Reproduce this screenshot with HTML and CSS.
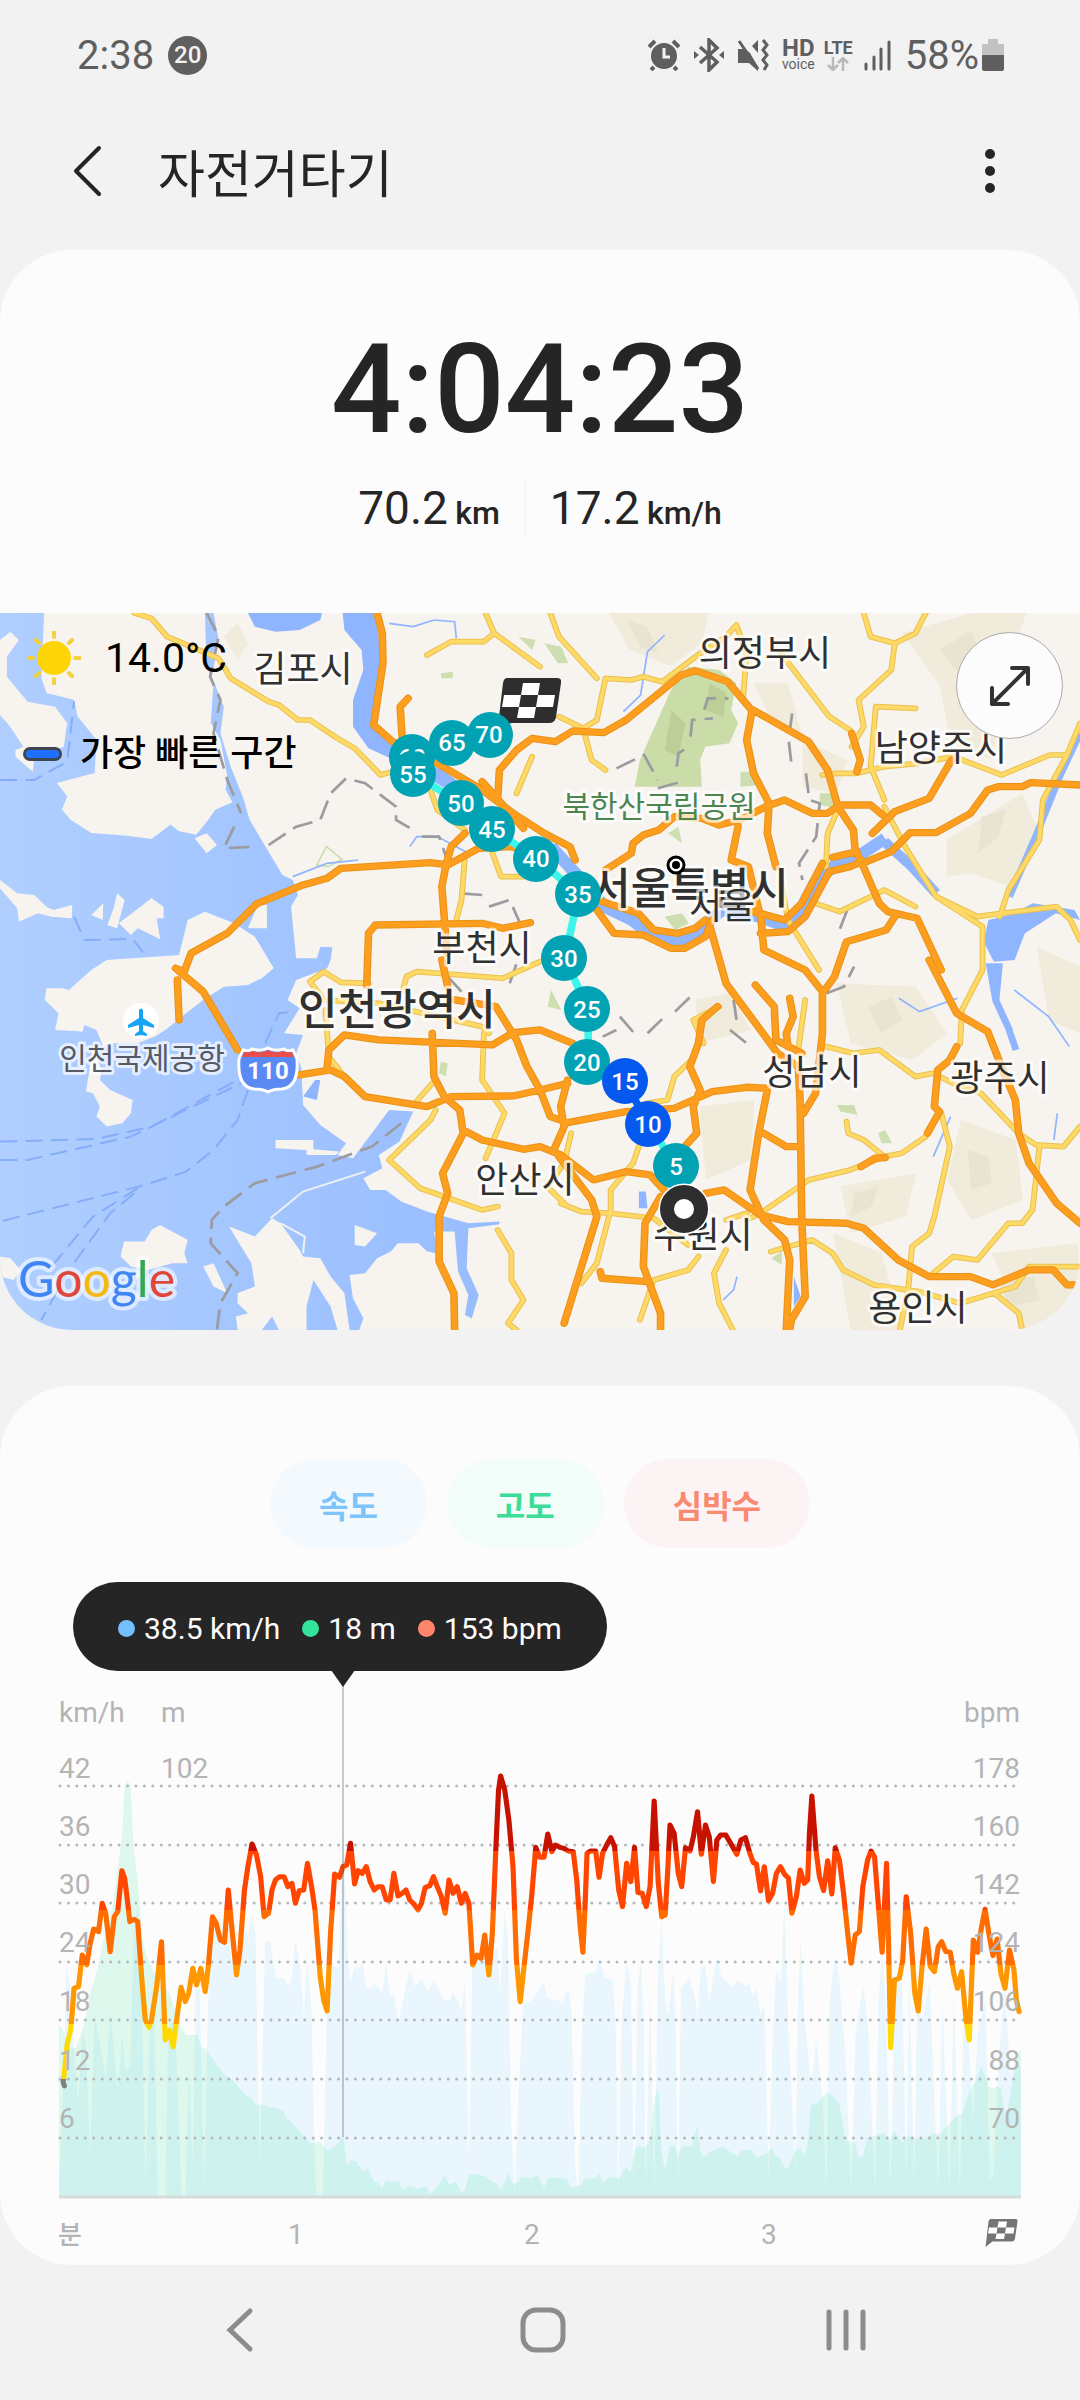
FILE: index.html
```html
<!DOCTYPE html>
<html lang="ko">
<head>
	<meta charset="UTF-8">
	<meta name="viewport" content="width=device-width">
	<title>자전거타기</title>
	<link rel="stylesheet" href="styles.css">
</head>
<body>
	<div class="status">
		<span class="time">2:38</span>
		<span class="count">20</span>
		<div class="status-icons">
			<svg width="34" height="32" viewBox="0 0 34 32"><circle cx="17" cy="17" r="13" fill="#5f5f5f"/><path d="M7 28l-3 3M27 28l3 3M2 8l6-6M32 8l-6-6" stroke="#5f5f5f" stroke-width="4"/><path d="M17 9v9h6" fill="none" stroke="#f2f2f2" stroke-width="3"/></svg>
			<svg width="30" height="34" viewBox="0 0 30 34"><path d="M6 9l17 15-8 8V2l8 8L6 25" fill="none" stroke="#5f5f5f" stroke-width="3.5"/><path d="M0 13l5 4-5 4zM30 13l-5 4 5 4z" fill="#5f5f5f"/></svg>
			<svg width="32" height="32" viewBox="0 0 32 32"><path d="M1 10h7l5 4 8 14v4l-9-8H1zM15 7l6-6v13z" fill="#5f5f5f"/><path d="M2 2l19 28M26 1l4 5-4 5 4 5-4 5 4 5-3 5" fill="none" stroke="#5f5f5f" stroke-width="3"/></svg>
			<span class="net"><b>HD</b><small>voice</small></span>
			<span class="net"><b class="lte">LTE</b><svg width="22" height="14" viewBox="0 0 22 14"><path d="M6 0v12M1 8l5 5 5-5M16 14V2M11 6l5-5 5 5" fill="none" stroke="#b9b9b9" stroke-width="2.5"/></svg></span>
			<svg width="30" height="32" viewBox="0 0 30 32"><path d="M4 25v5M12 18v12M19 10v20M27 3v27" stroke="#5f5f5f" stroke-width="3" stroke-linecap="round"/></svg>
			<span class="percent">58%</span>
			<svg width="22" height="32" viewBox="0 0 22 32"><path d="M6 0h10v5h6v12H0V5h6z" fill="#c2c2c2"/><path d="M0 16h22v14q0 2-2 2H2q-2 0-2-2z" fill="#5f5f5f"/></svg>
		</div>
	</div>

	<header class="toolbar">
		<button class="icon-btn" aria-label="뒤로"><svg width="30" height="52" viewBox="0 0 30 52"><path d="M27 3L4 26l23 23" fill="none" stroke="#252525" stroke-width="4" stroke-linecap="round" stroke-linejoin="round"/></svg></button>
		<h1>자전거타기</h1>
		<button class="icon-btn" aria-label="메뉴"><svg width="12" height="46" viewBox="0 0 12 46"><g fill="#252525"><circle cx="6" cy="6" r="5"/><circle cx="6" cy="23" r="5"/><circle cx="6" cy="40" r="5"/></g></svg></button>
	</header>

	<section class="card">
		<div class="clock">4:04:23</div>
		<div class="stats">
			<p>70.2 <small>km</small></p>
			<p>17.2 <small>km/h</small></p>
		</div>

		<div class="map">
			<svg class="map-svg" viewBox="0 0 1080 717">
				<defs>
					<linearGradient id="sea" x1="0" y1="0" x2="1" y2="0"><stop offset="0" stop-color="#b0cfff"/><stop offset="1" stop-color="#97bcff"/></linearGradient>
					<symbol id="flag" viewBox="0 0 64 56"><path d="M10 0h50q5 0 4 5l-5 34q-1 6-7 6H14L0 56 6 5q1-5 4-5z"/><path fill="#fff" d="M26 5h17l-2 12H24zM7 17h17l-2 12H5zM41 17h17l-2 12H39zM22 29h17l-2 11H20z"/></symbol>
					<path id="local" d="M390 39l50 16 45 55 150 65 35 60 110 70 30 10 55 45 35 0 80 55 50 30 75 80 35-10M1240 165l70-40h95l30-25-25-61M1435 100l133 100M1598 39l25 71 110 125M1923 245l-55-15-35 10-75-5-25 125-40 25-70-35M1693 385l25 95 40 30M1923 245l110-85 75-50 30-35 30 85-10 130M2268 160l140 190 60 40 20 50M2508 39l20 71 70 20-10 80-95 90 15 80-35 60M2598 130l60-30 30-61M2658 325l-115-5-15 180 40 100M2388 525l40-5 60 0 80-20 100-10 100-20 140 55 140-60 50 0 38-95M3098 465l-70 135-10 120-90 150-25 80M2568 620l60 120 90 150 120 60 70-10 160-20 40 40 28 60M2718 890l135 90v130l-60 120-5 100M2368 910l70 25 130-65 90 50M2428 640l-25 60-5 100M2268 850l20 110 90 150M2398 1340l80 20 75-10 105 80 50-10 60 30 80 30 110 120 50 35 80 5 48-60M3018 1640l-20 190-30 40h-40l-90 110-70-10-70 60M2733 1540l25 100-45 210-15 50-50 40-10 120-25 130M2458 1565l5 35 45 20 60 50 50-10 70-50M2568 1670l-100 40-120 30-140 100-40 20M2238 1955l120-35 60 40 30 50 90 45 130 20 120 35 160-50 40-60h148M2888 2080l70 60 10 50M2108 1950l-35 70 15 90 40 80M2108 1860l60-20M1773 1840v-70l65-80 20-60M1628 1810l60 25 85 5 125 15 100 80M1768 1850l-35 140-45 60M1658 1600l-20 90-50 70 50 50M1898 2040l-40 120M1898 2040l100-30 30-40M1255 1450l-50 60M1265 1530l-15 30-120 120 90 85 180 65 45-10M1405 1300l-5 140 65 100-55 135M1445 1890l40 70v80l35 60-45 70 25 20M1350 770l-10 130-15 60M1430 760l25 70h113M1545 470l-45 110M1250 570l20 60 80 60M1070 1150l-80-3-50-32-40 30 40 55 160 10 300 70 20 20M1170 1170l10-40 30-15 250 20 108-50M945 1230l10 140 45 60M2088 1220l-75 40 30 70M2008 1380l-50 50-20 70-60 10M2338 1200l-20 150"/>
					<path id="main" d="M1095 39l15 61 2 90-27 185 55 50 130 65 130 80 90 70 90 60 75 40 15 40M1185 295l-23 25 6 100M1400 545l60 70 60 70M510 1105l25 10 20-55 105-60 85-88 135-57 70-20 40-30 260-17 50 7 90-50 90-5 100 20M1283 1080l17 80M1350 700l-40 40-15 55-12 65 15 200M1065 1155l5-155 20-25 310-5 60 15 80-17M1445 600l5-90 50-60 45-35 68 10 50-32 90 5 65-38 160-135 40-13 95 33 65 80 170 100 55 85 30 110 45 70 5 60 20 40 50 120 25 25 85 20 70 155M2698 1080l80 160 90 55 40 105 40 100 10 100 30 90 80 120 68 60M2183 335l-15 85 20 100 45 90-5 90 25 100M2208 940l10 110 120 60 50 65M1758 810l75-50 5-30 30-25 45-15 45-40 80 5 50 20 60-15 75-40 55-20 80 40h45l35-25h90l35 30M2533 700l65-65 100-40 65-115M2418 772l70-17M2503 790l85-35 55-57h75l100-58 50-70 30-10h70l25-12 143 7M1733 930l50 70 85 5 80 40h40l60-35 20-50M1735 900l118 40 45 50 70 10 50-15 30-25M2188 935l90 25 50-50 60-120M2208 1000l80-5 50-45 70-135 60-15 35-15M2063 985l45 165 150 210 60 40 5 100 5 360 10 230-40 70-5 30M2388 1175v125l-15 140-5 40-35 60M2143 680l-20 100 50 20 35 150M2598 950l-25 40-115 35-35 105-35 50M510 1105l80 70 100 175M515 1140l5 120M870 1425l90-15 40 20 60 60 180 30 70-30 180-2 78-18 80-20M950 1400l5-50 45-45 100 15 330 15 60-37 78-8 95 40M1255 1300l5 130 30 60 45 40 10 70-60 120 15 60-25 70v135l43 95 2 110M1345 1590l55 30 120 28 48-8 60 25 95 75 95-25 70 10 40 45M1320 1200l120 20 60 100 30 80 38 70 30 80 50 18 170-33 140-10 110-50 100-13 60 3M1648 1440l-20 80 10 60-30 70 110 150 15 50-95 320M2083 1220l-45 40-10 70-25 70 30 70-20 50 10 80-35 40M2228 1470l-25 130-25 170 40 90 60 60 15 60-10 210M2048 1780l55-10 105 75 80 20 170 5 50 15 100 95 90 50h120l65 25 105-45h70l40 45h20M1918 1790l-45 80-5 130 50 140v50M1743 2015l5 20 130 10M2193 1155l55 65 5 100 75 40M2293 1195l10 55-20 50 5 40M2778 1340l-20 40-35 30-10 110 15 15-35 65M2218 1600l65 40h30M2473 400l25 80-10 35M2500 1700l40-25 30-2"/>
				</defs>
				<rect width="1080" height="717" fill="#f7f4ef"/>
				<g transform="scale(.3444 .3333) translate(0 -39)">
					<!-- hills -->
					<path fill="#f0ebda" d="M1768 39h290l-20 90-90 70-120-50zM2188 250l100 0 40 150-80-20zM2620 100l200-61h160l-30 90-70 350-120-50-30-170zM2748 720l220-140 50 120-80 160-120-40-70 10zM2030 1520l160-20-10 180-130 60zM2430 1150l230 10 90 140-100 80-180-50zM2790 1560l160 60 20 180-150 60-70-120zM2440 1760l220-40-30 130-160 50zM2420 1900l140 60 60 230H2470zM2880 1960l250-30 6 260h-160zM2180 1290l-60-110-100 20 10 130zM3010 1040l126 60v200l-90-40zM2330 420l130 60-30 100-100-20zM255 150l130-60 20 60-80 40-30 80-50-10 30-80zM290 600l80 10 20 60-90-40zM650 110l40-40 30 60-30 50z"/>
					<path fill="#e9e4d1" d="M1820 60l60 20 30 80-50-20zM2730 150l90-60 20 60-60 70zM2850 650l70-20-20 80-60 50zM2520 1220l70-30 30 70-60 40zM2810 1650l60 20 10 80-60 20zM2480 1780l70-20-20 60-60 30zM2900 2050l100-20 20 70-90 20zM330 250l60-60 10 30-30 50z"/>
					<!-- parks -->
					<path fill="#cadca7" d="M1998 200l90 10 50 40-15 80 20 40-25 60-70 10-15 40 5 80h-195l15-80 90-210z"/>
					<path fill="#bdcf97" d="M2060 250l50 30-10 70-50-20zM1950 330l40 40-20 100-40-20z"/>
					<path fill="#cddfb0" d="M1580 130l50 10 20 50h-30zM2150 515l50 0 10 40-60 5zM2380 580l40 0 10 45-50-10zM1940 700l30-20 10 50zM1930 950l50-10 20 30-40 20zM1505 110l50 10-10 30zM1280 220l35-5 0 20-33 0zM1600 1170l30 60-40-10zM2430 1515l50 0 10 30-50-10zM2550 1600l20-10 20 40-30 0zM2240 1975l30-20 0 40zM1280 1385l20 5-5 40-20-10z"/>
					<path fill="none" stroke="#cddfb0" stroke-width="5" d="M920 795l28-55 45 38-40 22z"/>
					<!-- sea and islands -->
					<path fill="url(#sea)" d="M0 39H620l15 81-20 110 35 90-10 80 30 100 35 90 20 70 95 165 30 15 15 45-20 35 15 155h60l10-35 35 2-5 38-10 25-90 35-25 60 35 25-45 75 55 5-20 55 15 45 5 110 50 60 75 55-25 35 45 10 105-145 70 5-40 90-60 40 10 40-55 30 20 35h45l45 35 75 30 120 35 90-5v8l-90 12-5 120 35 80-20 70-20-10 10-60-30-70-10-120-60 0 10 65-30-5-25-25-60 0-20 25-40 20-35 45-45 5 10 70 30 60-20 60H0z"/>
					<g fill="#f7f4ef">
						<path d="M128 39H595l5 160 20 50-8 120 28 50 20 110-5 40 20 38-50 22-20 30-35 45-50-10-25-20-55 43-70-10-105-8-60-40-25-30 15-40-30-40 110-30 5-100-55-70-10-50-80-20-15-45z"/>
						<path d="M0 120l30-25 25 25-35 50v60l60 75 80 15 35 50-10 70-85 30-5 45-50-45v-20l23-10-38-60-30-35zM565 715l35-15 30 35-30 25zM0 840l50 40 50 5 35 35 20 10 55-15-2 40-58-5-40-10-55 25-5-40-50-60zM265 945l35-35-2 50zM340 880l22 20-22 85-28-10 18-50zM345 970l95-75 35 25v35h-20l10 63-65-33-20 20zM750 910l25 5v70h-55z"/>
						<path d="M265 1110l45-30 210-15 25-105 50-25 85 35 60 40 55 95-35 30-40 20-70 5-60 40-50 40-60 50-30 20-50 20h-80l-20 10-20-50-35-15-5 20-80-5 10-50-40-40 5-35h45l20 5zM270 1340l25 70-5 30 30 30 65 30-5 40-25 30-45 10-30-30 10-30-20-40-20-5zM360 1925h60l20-35 25-15 80 45-10 40 10 30-45 0-70 20-50-10-30-30zM1030 1875l65 25-35 40-30-5zM0 1970l30 5 30 35-20 30-40-10zM800 1620h110v28l75 7-10 10h-85v-15l-90-5zM590 2000l30-10 40 90-40-20z"/>
						<path d="M665 1880l75 30 50-55 25 15 55 80 10 20 50 5 30 55 40 50 15 110h-35l-20-70-50-80-20 80 0 70h-80l-20-40-30 40h-70l-5-40 35-10-30-30v-30l50-20-10-70-30-50z"/>
					</g>
					<path fill="none" stroke="#eef0f2" stroke-width="6" d="M785 1855l95-80 180-60M815 1870l70 40-5 50"/>
					<path fill="#8fb5ff" d="M720 39l20 41 60 15 70-5 60-30 5-21zM995 39h95l20 151-25 180 70 80 130 60 80 60v30l-80-40-120-70-95-45-45-65v-80l30-90-5-60-50-60zM880 1490l35-50 15 0-10 60zM2870 960l60-15 70-35 120 20 16 30-70-20-90 60-30 80-60 5-30-60zM2862 1090h50l-10 110 40 90-20 5-40-90zM1855 1775l20 0 5 50-25 0zM2305 2030l20 60-20 30z"/>
					<g fill="none" stroke="#8fb5ff">
						<path stroke-width="36" d="M1600 740l80 90 75 90 80 40 60 50 70 20 70-40 60-60 110 20 65 25 55-45 40-80 60-55 80-35 65-45"/>
						<path stroke-width="30" d="M2568 725l80 75 70 80"/>
						<path stroke-width="20" d="M3136 400l-55 120-70 180-80 190M2930 1290l20 60"/>
						<path stroke-width="5" d="M1930 105l-50 50-20 130-50 50M1130 70l70 10 60-20 60 5 5 50M2610 1195l60 40 110-40M2945 1170l100 80 60 90M2760 1550l-50 120M1190 740l20-30 60 0 90 50M2100 2100l30-30 10-40M3070 1540l-10 80M850 830l100-40 90-10"/>
					</g>
					<!-- ferry lines -->
					<g fill="none" stroke="#86adf8" stroke-width="6" stroke-dasharray="50 24">
						<path d="M0 1625l280-8 160-37 250-140M0 1680l80 0 300-70 160-80 160-80M720 1470l-30 90-70 90-80 65-120 40L0 1865M400 1765l-130 85-120 150M390 1780l-70 60-120 170-80 150M0 540l100 0 95-55 20-180M770 1330l40-90 40-5M215 950l30 70 140-3 30 40"/>
					</g>
					<g fill="none" stroke="#9b9ba0" stroke-width="8" stroke-dasharray="60 26">
						<path d="M600 39l35 71-25 120 30 70-20 100 40 140 40 100M680 680l-30 65 90-5M780 735l80-55 70-20 30-80 45-45 55 15 90 70 0 40 50 30M1165 1570l-85 70-160 60-180 50-90 70-35 40-3 70 78 90-50 90-10 80M1225 710l50 0 20 60M1420 920l60-20 30 70M1340 880l60 5M1790 505l80-40 40 75M1910 565l70-20M2045 330l10-35 60 0M2005 410l5-50 60-5M1965 500l5-40 30-20M2300 340l-10 80 10 90M2340 520l10 80 30 10-10 100-50 80 10 50M2460 930l-30 80M1960 1235l60-60M1880 1300l50-50M2130 1200l10 70M2400 1180l50-20 30-60M1300 1130l40 45M1480 1150l20-60M1750 1310l40-20M1800 1250l50 60M2120 1290l60 50"/>
					</g>
					<use href="#local" class="road casing-yellow"/>
					<use href="#local" class="road fill-yellow"/>
					<use href="#main" class="road casing-orange"/>
					<use href="#main" class="road fill-orange"/>
					<!-- ridden track -->
					<path fill="none" stroke="#3df6ea" stroke-width="22" d="M1422 406l-108 24-114 50 0 43 140 87 90 78 130 88 120 107-40 192 68 153v159l108 57"/>
					<path fill="none" stroke="#055ee8" stroke-width="22" d="M1814 1444l69 129"/>
					<path fill="none" stroke="#3df6ea" stroke-width="22" d="M1883 1573l81 126 22 130"/>
				</g>

				<g class="labels">
					<text x="303" y="69">김포시</text>
					<text x="765" y="53">의정부시</text>
					<text x="941" y="148">남양주시</text>
					<text x="659" y="204" class="park">북한산국립공원</text>
					<text x="690" y="291" class="big">서울특별시</text>
					<text x="722" y="306">서울</text>
					<text x="482" y="348">부천시</text>
					<text x="397" y="412" class="big">인천광역시</text>
					<text x="142" y="456" class="airport">인천국제공항</text>
					<text x="525" y="580">안산시</text>
					<text x="812" y="472">성남시</text>
					<text x="1000" y="478">광주시</text>
					<text x="703" y="635">수원시</text>
					<text x="918" y="708">용인시</text>
				</g>
				<circle cx="676" cy="252" r="8" fill="#fff" stroke="#000" stroke-width="3"/><circle cx="676" cy="252" r="4"/>
				<circle cx="141" cy="408" r="18" fill="#fff"/>
				<path fill="#16a5f5" d="M139 397q2-3 4 0v8l11 7v3l-11-3v6l4 3v2l-6-1-6 1v-2l4-3v-6l-11 3v-3l11-7z"/>
				<path d="M243 437q6 2 9-1 9 3 16-1 7 4 16 1 3 3 9 1l4 9q2 28-15 30-9 0-14 3-5-3-14-3-17-2-15-30z" fill="#5b8af5" stroke="#fff" stroke-width="3"/>
				<path d="M244 439q6 1 9-1 9 3 15-1 6 4 15 1 3 2 9 1l2 5h-52z" fill="#e84f4b"/>
				<text x="268" y="466" class="shield">110</text>

				<use href="#flag" x="497" y="65" width="64" height="56" fill="#2e2e2e"/>
				<g class="pins">
					<circle cx="412" cy="144" r="23"/><text x="412" y="153">60</text>
					<circle cx="413" cy="161" r="23"/><text x="413" y="170">55</text>
					<circle cx="452" cy="130" r="23"/><text x="452" y="138">65</text>
					<circle cx="490" cy="122" r="23"/><text x="489" y="130">70</text>
					<circle cx="461" cy="190" r="23"/><text x="461" y="199">50</text>
					<circle cx="492" cy="216" r="23"/><text x="492" y="225">45</text>
					<circle cx="536" cy="246" r="23"/><text x="536" y="254">40</text>
					<circle cx="578" cy="281" r="23"/><text x="578" y="290">35</text>
					<circle cx="564" cy="345" r="23"/><text x="564" y="354">30</text>
					<circle cx="587" cy="396" r="23"/><text x="587" y="405">25</text>
					<circle cx="587" cy="449" r="23"/><text x="587" y="458">20</text>
					<circle cx="625" cy="468" r="23" class="fast"/><text x="625" y="477">15</text>
					<circle cx="648" cy="511" r="23" class="fast"/><text x="648" y="520">10</text>
					<circle cx="676" cy="553" r="23"/><text x="676" y="562">5</text>
				</g>
				<circle cx="684" cy="596" r="17" fill="#fff" stroke="#fff" stroke-width="17"/><circle cx="684" cy="596" r="17" fill="#fff" stroke="#2e2e2e" stroke-width="14"/>
				<text x="18" y="684" class="google"><tspan fill="#4285f4">G</tspan><tspan fill="#e2453a">o</tspan><tspan fill="#f5b90f">o</tspan><tspan fill="#4285f4">g</tspan><tspan fill="#34a853">l</tspan><tspan fill="#e2453a">e</tspan></text>
			</svg>

			<div class="overlay">
				<p class="weather"><svg width="54" height="54" viewBox="-27 -27 54 54"><circle r="17" fill="#fdd406"/><path d="M0-26v5M0 21v5M-26 0h5M21 0h5M-18-18l3 3M15 15l3 3M-18 18l3-3M15-15l3-3" stroke="#f4d03c" stroke-width="4" stroke-linecap="round"/></svg><span>14.0°C</span></p>
				<p class="fastest"><i></i>가장 빠른 구간</p>
			</div>
			<button class="expand" aria-label="지도 확대"><svg width="42" height="42" viewBox="0 0 42 42"><path d="M3 39L39 3M23 3h16v16M3 23v16h16" fill="none" stroke="#333" stroke-width="4" stroke-linecap="round" stroke-linejoin="round"/></svg></button>
		</div>
	</section>

	<section class="card chart-card">
		<div class="tabs">
			<button class="tab speed">속도</button>
			<button class="tab height">고도</button>
			<button class="tab heart">심박수</button>
		</div>
		<div class="tooltip">
			<span class="speed">38.5 km/h</span>
			<span class="height">18 m</span>
			<span class="heart">153 bpm</span>
		</div>
		<svg class="chart" viewBox="59 -29 962 594">
			<defs>
				<linearGradient id="zones" gradientUnits="userSpaceOnUse" x1="0" y1="0" x2="0" y2="1200">
					<stop offset=".3775" stop-color="#c81200"/><stop offset=".3775" stop-color="#ff4500"/>
					<stop offset=".525" stop-color="#ff4500"/><stop offset=".525" stop-color="#ff6d00"/>
					<stop offset=".6625" stop-color="#ff6d00"/><stop offset=".6625" stop-color="#ff9700"/>
					<stop offset=".81" stop-color="#ff9700"/><stop offset=".81" stop-color="#ffd900"/>
					<stop offset=".9475" stop-color="#ffd900"/><stop offset=".9475" stop-color="#808080"/>
				</linearGradient>
			</defs>
			<g transform="scale(.3443 .3333)">
				<!-- speed -->
				<path fill="#e9f6fd" d="M171 1488L185 1090 193 790 202 850 215 1040 227 1210 240 990 250 1040 262 1375 275 940 308 1140 320 930 343 1175 354 1005 365 1110 378 1100 388 700 400 610 410 800 423 1465 435 960 447 880 458 1488H480L488 1000 500 960 510 1000 527 1488H538L549 1090 560 1400 568 860 580 870 594 1480 603 960 612 700 622 650 640 730 650 735 663 620 672 780 690 800 712 690 720 710 733 640 742 700 755 1410 765 960 770 720 785 725 800 830 825 835 838 860 848 830 858 720 872 800 882 950 893 780 905 930 910 1200 918 1488H938L950 900 962 780 972 800 985 800 990 600 997 390 1004 600 1010 770 1018 845 1030 800 1042 805 1052 790 1064 860 1077 865 1090 850 1110 880 1121 790 1133 885 1144 885 1158 970 1170 900 1190 810 1205 860 1224 835 1245 875 1259 840 1280 880 1293 900 1304 905 1316 875 1328 900 1340 935 1350 840 1362 1390 1372 790 1385 775 1410 780 1430 770 1445 740 1453 890 1465 630 1475 720 1484 1250 1495 1488 1505 1200 1520 910 1540 905 1560 880 1568 860 1580 850 1590 895 1610 900 1635 905 1650 865 1660 930 1670 1400 1680 1480 1690 1000 1700 820 1730 815 1740 775 1755 830 1780 840 1788 980 1796 1480 1806 950 1820 785 1832 850 1842 1470 1852 850 1862 785 1870 1000 1876 1480 1888 870 1900 1480 1912 800 1922 650 1932 900 1940 950 1956 810 1962 980 1970 1480 1978 860 1990 850 2003 835 2020 900 2026 960 2036 800 2048 795 2060 910 2070 840 2083 765 2095 830 2125 860 2142 840 2165 860 2175 850 2187 890 2197 865 2208 940 2220 915 2232 1440 2245 1000 2254 810 2268 850 2278 600 2290 1000 2310 1410 2318 900 2325 720 2337 960 2357 1160 2370 1020 2390 1200 2400 1488 2410 900 2425 765 2437 830 2455 1060 2472 1480 2485 1000 2508 855 2522 1000 2541 1480 2552 900 2562 755 2572 900 2586 1480 2600 840 2620 850 2633 1470 2641 800 2655 1470 2664 900 2680 960 2700 845 2725 1480 2737 905 2758 1475 2770 880 2788 1488 2800 900 2812 1000 2826 1265 2840 1000 2862 900 2875 1440 2885 1430 2900 1100 2918 860 2935 1130 2945 1090 2965 1100V1488z"/>
				<!-- elevation -->
				<path fill="#33e39a" fill-opacity=".15" d="M171 972L185 995 195 1045 220 1045 240 990 250 945 262 880 285 800 300 720 318 660 330 600 345 480 355 400 362 260 370 243 379 255 388 440 400 540 412 700 425 770 435 785 447 815 460 860 490 870 505 920 520 960 527 985 540 1005 574 1005 585 1045 598 1045 620 1080 650 1122 680 1145 710 1182 733 1195 742 1215 762 1213 780 1223 802 1222 822 1233 835 1258 852 1272 882 1310 903 1330 930 1325 950 1353 975 1338 997 1307 1007 1395 1020 1380 1035 1385 1052 1415 1068 1405 1085 1443 1100 1450 1110 1465 1120 1443 1158 1445 1168 1470 1190 1458 1210 1465 1238 1460 1248 1482 1270 1460 1292 1425 1305 1455 1325 1445 1340 1478 1350 1470 1362 1425 1385 1422 1410 1430 1430 1447 1442 1450 1455 1470 1478 1418 1488 1450 1500 1450 1512 1432 1545 1435 1560 1425 1568 1437 1580 1463 1592 1433 1645 1435 1660 1463 1688 1455 1700 1435 1730 1435 1740 1420 1750 1447 1775 1432 1800 1435 1810 1410 1822 1405 1832 1418 1845 1345 1858 1338 1870 1345 1888 1320 1903 1190 1910 1170 1914 1180 1920 1350 1932 1415 1945 1340 1958 1335 1970 1367 1980 1340 2010 1338 2025 1275 2036 1362 2048 1370 2063 1355 2098 1340 2120 1355 2140 1370 2155 1350 2185 1350 2197 1375 2225 1360 2243 1345 2250 1365 2265 1375 2280 1405 2292 1400 2310 1350 2326 1345 2337 1370 2345 1340 2355 1215 2375 1210 2403 1175 2420 1190 2438 1215 2457 1325 2484 1328 2492 1370 2506 1370 2518 1315 2570 1300 2582 1320 2598 1295 2622 1328 2640 1305 2660 1318 2690 1315 2710 1300 2730 1305 2750 1280 2782 1245 2795 1243 2815 1175 2835 1140 2850 1102 2862 1130 2872 1160 2885 1167 2897 1157 2907 1165 2915 1220 2925 1240 2940 1150 2955 1060 2965 1050V1490H171z"/>
			</g>
			<path class="grid" d="M60 86H1021M60 145H1021M60 203H1021M60 262H1021M60 320H1021M60 379H1021M60 438H1021"/>
			<path d="M59 497H1021" stroke="#d6dcda" stroke-width="3"/>
			<g transform="scale(.3443 .3333)">
				<!-- heart rate -->
				<path class="pulse" d="M187 1158L183 1145 185 1137 195 1035 205 990 208 960 215 865 228 860 239 765 252 795 262 730 272 687 286 695 297 610 307 640 320 755 332 650 342 635 354 512 362 535 370 600 377 665 390 658 400 665 412 840 422 960 433 982 440 960 455 860 469 725 480 1020 492 990 503 1040 513 960 526 862 538 905 548 880 560 805 571 855 583 805 596 875 605 800 617 650 628 670 640 720 652 727 663 570 675 700 687 825 697 750 710 570 720 500 732 432 745 465 757 530 767 650 780 640 790 570 800 540 812 530 825 530 836 560 848 550 858 610 869 572 882 570 893 490 905 560 915 630 930 830 940 900 950 933 960 700 972 522 986 532 996 500 1007 495 1018 430 1030 552 1040 512 1052 520 1064 500 1075 545 1087 570 1098 560 1110 560 1122 600 1133 600 1144 520 1156 588 1168 580 1179 570 1190 600 1202 612 1214 630 1224 610 1235 562 1248 558 1259 530 1270 560 1282 590 1293 640 1304 540 1316 580 1328 560 1340 610 1351 580 1362 610 1373 795 1385 765 1397 775 1408 705 1420 825 1430 700 1440 450 1448 270 1454 228 1466 270 1478 360 1490 500 1500 780 1511 905 1522 800 1535 680 1545 580 1556 442 1568 472 1580 472 1591 402 1603 455 1613 435 1626 442 1638 445 1650 453 1665 455 1675 540 1685 680 1693 757 1700 600 1705 460 1715 453 1730 453 1740 532 1750 460 1762 435 1774 413 1785 440 1797 570 1808 620 1820 490 1832 545 1843 442 1853 578 1865 580 1877 620 1888 560 1900 303 1912 550 1922 650 1932 645 1940 500 1946 375 1958 400 1970 520 1980 560 1991 443 2004 453 2014 410 2026 335 2037 463 2049 375 2060 410 2072 545 2082 420 2093 405 2108 405 2125 435 2140 463 2152 420 2165 413 2178 460 2188 488 2197 492 2209 573 2220 500 2232 602 2244 580 2255 520 2267 500 2278 522 2290 535 2300 640 2313 590 2324 510 2336 550 2346 540 2351 400 2358 288 2370 450 2380 530 2392 572 2404 482 2416 582 2426 443 2438 480 2450 580 2462 700 2472 790 2484 705 2496 695 2506 560 2520 480 2530 453 2540 470 2550 600 2562 757 2575 490 2580 700 2587 1043 2598 840 2612 835 2622 780 2632 590 2645 700 2657 880 2667 933 2678 800 2690 687 2702 800 2714 815 2725 740 2735 725 2747 755 2760 757 2770 820 2781 865 2793 815 2805 950 2815 1020 2827 720 2839 757 2851 680 2861 628 2872 700 2884 767 2896 717 2907 820 2919 865 2932 750 2945 810 2952 900 2960 935"/>
			</g>
			<path d="M343-15V437" stroke="#555" stroke-opacity=".6"/>
			<path d="M331-30h24l-12 17z" fill="#252525"/>
			<g class="axis">
				<text x="59" y="22">km/h</text><text x="161" y="22">m</text>
				<text x="59" y="78">42</text><text x="161" y="78">102</text>
				<text x="59" y="136">36</text>
				<text x="59" y="194">30</text>
				<text x="59" y="252">24</text>
				<text x="59" y="311">18</text>
				<text x="59" y="370">12</text>
				<text x="59" y="428">6</text>
				<g class="right">
					<text x="1020" y="22">bpm</text>
					<text x="1020" y="78">178</text>
					<text x="1020" y="136">160</text>
					<text x="1020" y="194">142</text>
					<text x="1020" y="252">124</text>
					<text x="1020" y="311">106</text>
					<text x="1020" y="370">88</text>
					<text x="1020" y="428">70</text>
				</g>
				<text x="58" y="544" class="unit">분</text>
				<text x="288" y="544">1</text>
				<text x="524" y="544">2</text>
				<text x="761" y="544">3</text>
			</g>
			<use href="#flag" x="985" y="519" width="33" height="28" fill="#757575"/>
		</svg>
	</section>

	<nav class="nav">
		<button aria-label="이전"><svg width="28" height="46" viewBox="0 0 28 46"><path d="M24 4L4 23l20 19" fill="none" stroke="#8c8c8c" stroke-width="5" stroke-linecap="round"/></svg></button>
		<button aria-label="홈"><svg width="46" height="46" viewBox="0 0 46 46"><rect x="3" y="3" width="40" height="40" rx="13" fill="none" stroke="#8c8c8c" stroke-width="5"/></svg></button>
		<button aria-label="최근 앱"><svg width="42" height="46" viewBox="0 0 42 46"><path d="M4 5v36M21 5v36M38 5v36" stroke="#8c8c8c" stroke-width="5" stroke-linecap="round"/></svg></button>
	</nav>
</body>
</html>
```
FILE: styles.css
```css
* {
	margin: 0;
	padding: 0;
	box-sizing: border-box;
}
body {
	font-family: Roboto, "Noto Sans CJK KR", sans-serif;
	background: #f2f2f2;
	color: #252525;
}
button {
	font-family: inherit;
	background: none;
	border: 0;
}
svg {
	display: block;
}

/* status bar */
.status {
	display: flex;
	align-items: center;
	height: 110px;
	padding: 0 76px 0 77px;
	color: #5f5f5f;
}
.time {
	font-size: 40px;
}
.count {
	width: 39px;
	margin-left: 14px;
	border-radius: 50%;
	background: #5f5f5f;
	color: #f2f2f2;
	font-size: 24px;
	font-weight: 500;
	line-height: 39px;
	text-align: center;
}
.status-icons {
	display: flex;
	align-items: center;
	gap: 13px;
	margin-left: auto;
}
.net {
	display: flex;
	flex-direction: column;
	align-items: center;
	margin-right: -4px;
	font-size: 24px;
	line-height: 18px;
}
.net small {
	font-size: 14px;
	line-height: 14px;
}
.net .lte {
	font-size: 18px;
}
.percent {
	margin-right: -10px;
	font-size: 40px;
}

/* toolbar */
.toolbar {
	display: flex;
	align-items: center;
	height: 122px;
	margin-bottom: 18px;
	padding: 0 84px 0 72px;
}
.toolbar h1 {
	flex: 1;
	margin-left: 56px;
	font-size: 51px;
	font-weight: 400;
}

.card {
	margin-bottom: 56px;
	border-radius: 72px;
	background: #fcfcfc;
	overflow: hidden;
}
.clock {
	padding-top: 70px;
	font-size: 124px;
	font-weight: 500;
	line-height: 140px;
	text-align: center;
}
.stats {
	display: flex;
	justify-content: center;
	margin: 18px 0 75px;
}
.stats p {
	height: 60px;
	padding: 0 24px;
	font-size: 46px;
	line-height: 60px;
}
.stats p + p {
	border-left: 2px solid #f5f5f5;
}
.stats small {
	margin-left: -4px;
	font-size: 32px;
	font-weight: 500;
	line-height: 32px;
}

/* map */
.map {
	position: relative;
}
.map-svg {
	width: 100%;
	height: auto;
}
.road {
	fill: none;
	stroke-linecap: round;
	stroke-linejoin: round;
}
.casing-yellow {
	stroke: #e9c050;
	stroke-width: 17px;
}
.fill-yellow {
	stroke: #fed966;
	stroke-width: 11px;
}
.casing-orange {
	stroke: #e99217;
	stroke-width: 22px;
}
.fill-orange {
	stroke: #fd9e1f;
	stroke-width: 16px;
}
.labels text {
	font-family: "Noto Sans CJK KR", sans-serif;
	font-size: 36px;
	fill: #303030;
	stroke: #fff;
	stroke-opacity: .7;
	stroke-width: 6px;
	stroke-linejoin: round;
	paint-order: stroke;
	text-anchor: middle;
}
.labels .big {
	font-size: 43px;
	font-weight: 500;
}
.labels .park {
	font-size: 30px;
	fill: #4d8550;
}
.labels .airport {
	font-size: 30px;
	fill: #555a66;
}
.shield {
	font-family: Roboto, sans-serif;
	font-size: 24px;
	font-weight: 700;
	fill: #fff;
	text-anchor: middle;
}
.pins {
	fill: #00a2b3;
}
.pins .fast {
	fill: #0559ee;
}
.pins text {
	font-size: 24px;
	font-weight: 500;
	fill: #fff;
	text-anchor: middle;
}
.google {
	font-family: Lato, sans-serif;
	font-size: 50px;
	stroke: #fff;
	stroke-opacity: .6;
	stroke-width: 8px;
	stroke-linejoin: round;
	paint-order: stroke;
}
.overlay {
	position: absolute;
	top: 18px;
	left: 23px;
	color: #000;
}
.weather {
	display: flex;
	align-items: center;
	font-size: 41px;
	line-height: 54px;
}
.weather svg {
	margin: 0 24px 0 4px;
}
.fastest {
	display: flex;
	align-items: center;
	margin-top: 42px;
	font-size: 36px;
	font-weight: 500;
	line-height: 54px;
}
.fastest i {
	width: 39px;
	height: 14px;
	margin-right: 18px;
	border: 3px solid #404450;
	border-radius: 7px;
	background: #1f70ff;
}
.expand {
	position: absolute;
	top: 19px;
	right: 17px;
	display: grid;
	place-items: center;
	width: 107px;
	height: 107px;
	border: 1px solid #aaa;
	border-radius: 50%;
	background: #fcfcfc;
}

/* chart */
.chart-card {
	margin-bottom: 0;
	padding: 73px 59px 0;
}
.tabs {
	display: flex;
	justify-content: center;
	gap: 20px;
	margin-bottom: 34px;
}
.tab {
	height: 89px;
	padding: 0 49px;
	border-radius: 45px;
	font-size: 32px;
	font-weight: 700;
}
.tab.speed {
	background: #f4f9fd;
	color: #7cc4fb;
}
.tab.height {
	background: #f2fdf9;
	color: #3edc99;
}
.tab.heart {
	background: #fcf4f4;
	color: #f98971;
}
.tooltip {
	display: inline-flex;
	gap: 22px;
	height: 89px;
	margin-left: 14px;
	padding: 3px 45px 0;
	border-radius: 45px;
	background: #252525;
	color: #fcfcfc;
	font-size: 30px;
	vertical-align: top;
}
.tooltip span {
	display: flex;
	align-items: center;
}
.tooltip span:before {
	content: '';
	width: 17px;
	height: 17px;
	margin-right: 9px;
	border-radius: 50%;
}
.tooltip .speed:before {
	background: #74c0ff;
}
.tooltip .height:before {
	background: #33e39a;
}
.tooltip .heart:before {
	background: #ff866c;
}
.chart {
	width: 100%;
	height: auto;
	overflow: visible;
}
.grid {
	fill: none;
	stroke: #b4b8b8;
	stroke-width: 3px;
	stroke-linecap: round;
	stroke-dasharray: 0 8.44px;
}
.pulse {
	fill: none;
	stroke: url(#zones);
	stroke-width: 15px;
	stroke-linecap: round;
	stroke-linejoin: round;
}
.axis text {
	font-size: 28px;
	fill: #b4b4b4;
}
.axis .right text {
	text-anchor: end;
}
.axis .unit {
	font-size: 26px;
	font-weight: 500;
}

/* bottom navigation */
.nav {
	display: grid;
	grid-template-columns: 1fr 1fr 1fr;
	height: 130px;
	padding: 0 82px 0 88px;
}
.nav button {
	display: grid;
	place-items: center;
}
```
